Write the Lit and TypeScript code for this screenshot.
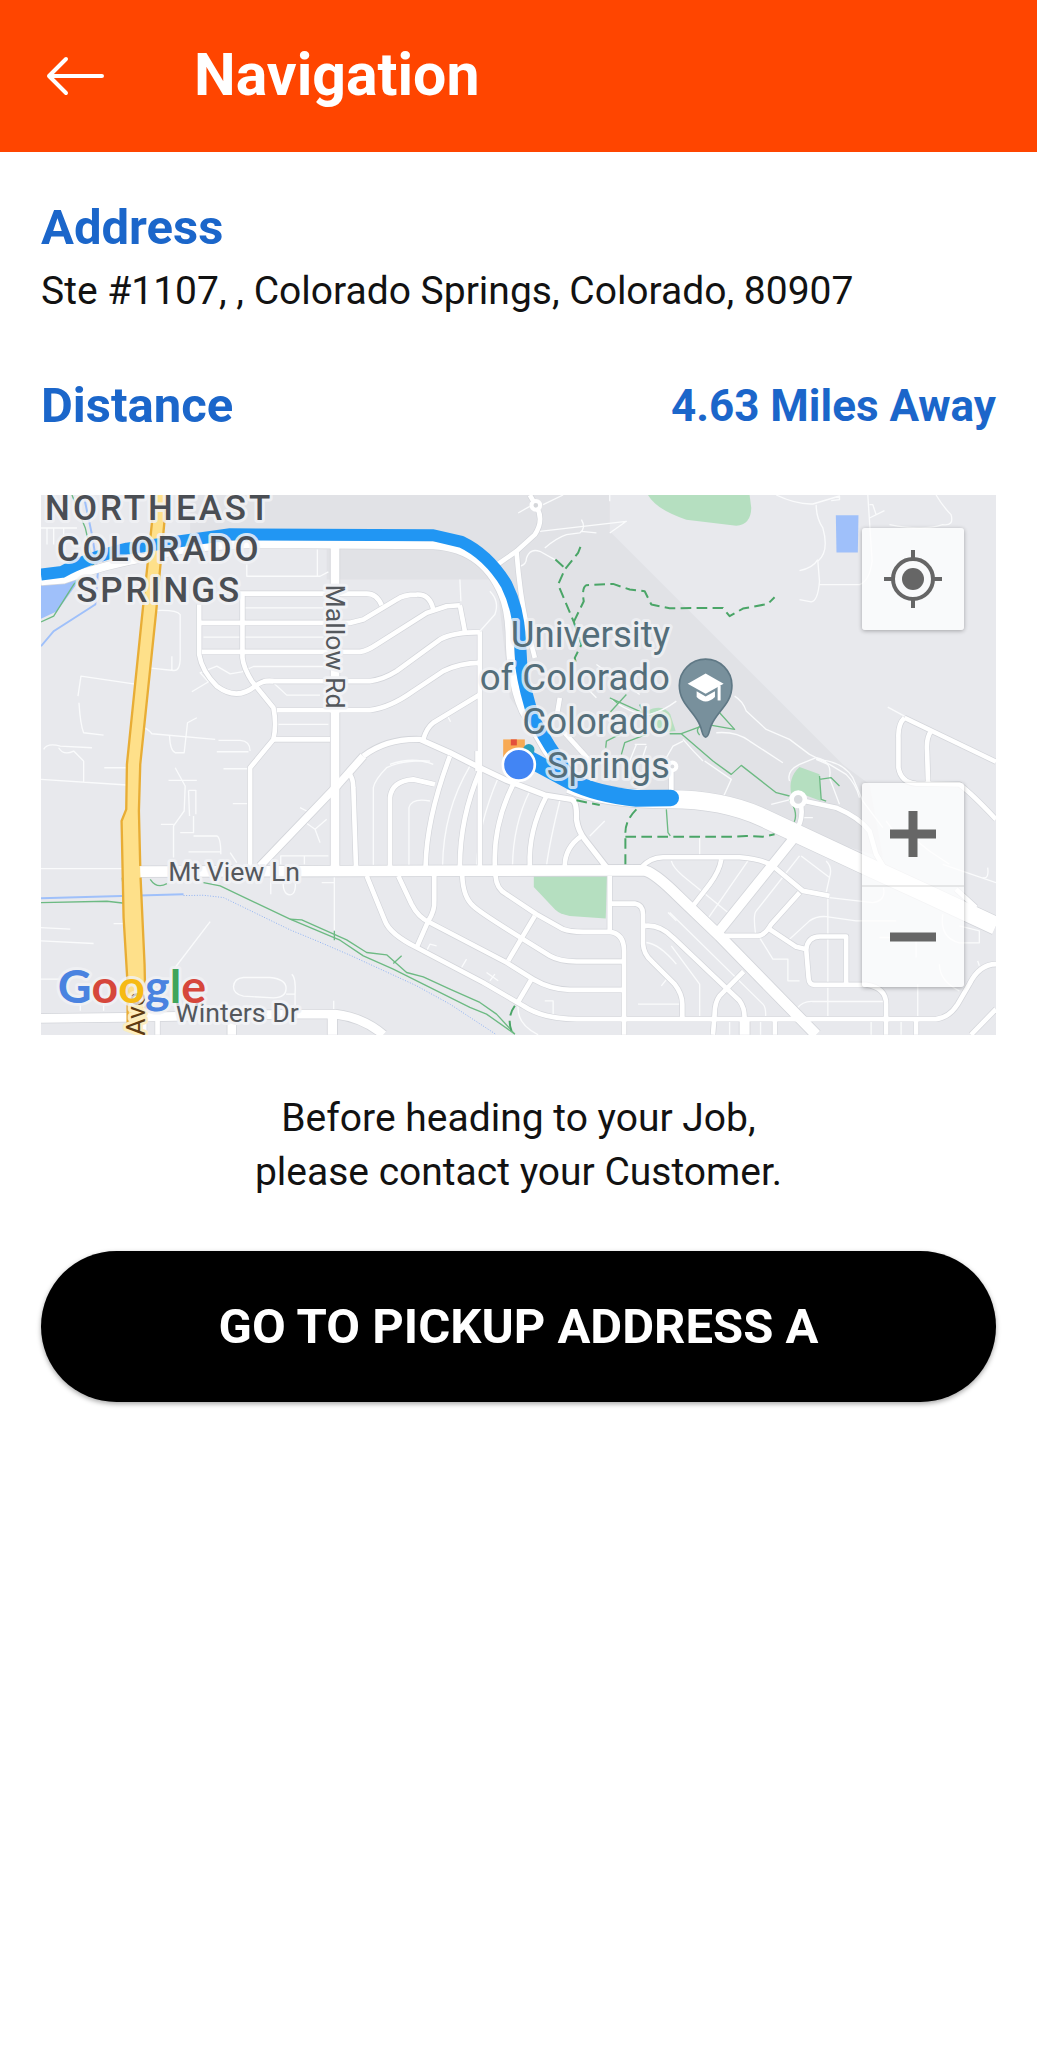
import { LitElement, html, svg, css } from "lit";
import { customElement } from "lit/decorators.js";

// Road geometry, three map units to one pixel at the default width.
const LOCAL_ROADS = [
  "M630 327 H1010 Q1040 327 1055 362",
  "M510 415 H960 L1000 405 L1100 345 Q1120 330 1160 330 Q1200 328 1210 375",
  "M515 502 H990 Q1010 500 1040 480 L1190 385 L1250 365 L1290 362",
  "M1290 362 L1305 440",
  "M700 590 H1020 Q1060 585 1100 560 L1230 465 Q1270 443 1350 443",
  "M1350 440 V1150",
  "M740 677 H1020 Q1080 670 1150 620 L1240 560 Q1290 535 1350 535",
  "M725 765 H900",
  "M1350 630 L1210 715 Q1190 730 1180 765",
  "M507 360 V510 Q515 560 560 605 Q620 650 675 605 Q700 585 730 590",
  "M637 330 V520 Q640 550 665 590 L730 670 Q740 720 730 765 L660 850 V1145",
  "M955 865 Q970 880 970 910 L978 1150",
  "M1080 1145 V940 Q1085 890 1150 885 L1215 900",
  "M1260 815 Q1190 1000 1187 1145",
  "M1350 860 Q1290 1000 1290 1145",
  "M1450 900 Q1390 1020 1395 1145",
  "M1550 935 Q1495 1040 1500 1145",
  "M1655 1055 Q1605 1090 1605 1145",
  "M1343 800 L1343 860",
  "M1010 1175 L1065 1310 Q1080 1350 1160 1390 L1360 1495 L1480 1565 Q1540 1605 1640 1605 H2720 Q2760 1600 2785 1560 L2820 1500 Q2850 1440 2900 1440",
  "M1105 1175 L1145 1260 Q1165 1300 1200 1315 L1430 1435 L1510 1485 Q1560 1515 1620 1517 H1780",
  "M1297 1175 Q1300 1240 1330 1265 Q1350 1285 1480 1365 L1560 1415 Q1590 1432 1640 1432 H1780",
  "M1397 1175 Q1400 1215 1430 1230 L1520 1290 L1600 1335 Q1620 1343 1660 1343 H1740 Q1783 1348 1783 1400 V1652",
  "M1213 1175 V1250 Q1215 1280 1195 1310 L1160 1390",
  "M1515 1295 L1435 1430",
  "M1505 1485 L1462 1558",
  "M1740 1175 V1343",
  "M1740 1258 H1815 Q1840 1262 1840 1290 V1380 Q1842 1410 1865 1430 L1935 1500 Q1958 1530 1958 1560 V1600",
  "M1845 1325 Q1890 1320 1930 1360 L2130 1550 Q2145 1570 2145 1600",
  "M1835 1150 Q1860 1120 1900 1119 H2130 Q2200 1125 2230 1145 L2320 1220 L2400 1235",
  "M2075 1125 Q2070 1160 2040 1200 L1990 1265",
  "M2310 1225 L2225 1320 Q2205 1355 2185 1355 H2085",
  "M2220 1335 L2300 1388 L2330 1395 L2337 1480 Q2338 1502 2355 1502 H2510 Q2570 1510 2570 1560 V1652",
  "M2330 1395 Q2335 1355 2375 1357 H2450 V1500",
  "M2142 1462 L2070 1535 Q2055 1555 2055 1590 L2050 1652",
  "M2236 1605 V1652",
  "M2660 1605 V1652",
  "M2315 965 Q2320 1000 2305 1030",
  "M2325 950 L2420 970 Q2490 1000 2520 1040 L2540 1110 L2570 1160",
  "M2625 700 L2900 832",
  "M2625 700 Q2605 720 2607 760 V850 Q2615 895 2660 898 L2790 900 Q2830 930 2900 1005",
  "M2705 740 Q2690 760 2693 800 L2696 895",
  "M2825 1652 L2900 1575",
  "M1500 31 L1518 62 Q1545 105 1515 150 L1460 200 L1395 245",
  "M1460 200 Q1470 330 1490 420 L1515 520",
  "M1590 640 L1580 700",
  "M1600 740 L1690 840",
  "M342 1605 V1652 M382 1605 V1652",
  "M1925 855 V925",
  "M2780 1215 L2840 1270",
];

const WIDE_ROADS = [
  "M325 1162 L1840 1158 Q1870 1160 1950 1240 L2070 1355 L2360 1652",
  "M915 185 V1162",
  "M690 1145 L925 900 L1000 815",
  "M1000 815 Q1070 762 1170 765 L1260 805 L1340 845 L1430 888 L1545 932 L1625 945 Q1642 950 1640 1005 Q1645 1040 1665 1065 L1735 1155",
  "M2290 1065 L2065 1345",
  "M32 1603 L280 1600 L800 1590 H915 Q1000 1600 1060 1652",
  "M605 1600 V1652",
  "M907 1600 V1652",
  "M2145 1605 V1652",
];
const WIDE_WIDTHS = [32, 26, 22, 16, 28, 26, 26, 28, 30];

const HIGHWAY_WEST =
  "M32 290 L100 285 Q220 240 370 215 Q480 182 700 178 L1210 182 Q1370 190 1425 350 Q1440 400 1440 480 Q1445 600 1480 680 L1550 800 L1620 900";
const HIGHWAY_EAST =
  "M1620 900 Q1720 945 1920 945 Q2080 945 2200 1000 L2500 1140 L2700 1232 L2900 1325";

const LANES = [
  "M1030 1145 V910 Q1035 885 1070 850 Q1120 825 1200 830",
  "M1137 1145 V970 Q1145 940 1200 950",
  "M1238 1145 Q1240 980 1320 845",
  "M1340 1145 Q1345 1020 1405 880",
  "M1448 1145 Q1450 1020 1500 920",
  "M1550 1145 Q1560 1070 1590 950",
  "M650 240 V275 H870 L895 262 M862 195 V275",
  "M640 370 H880 M520 458 H880",
  "M485 622 L535 592 L510 565 L560 545 L600 568 L635 562 L670 546 H880",
  "M730 595 L770 632 H870",
  "M745 720 H895",
  "M375 378 Q440 375 450 390 V520 Q450 560 430 558 L355 550 M425 515 V558",
  "M320 600 L152 575 L143 635 M146 655 Q150 720 160 745 L220 752",
  "M330 725 Q350 730 365 748 L555 765 M565 768 H630 Q660 770 660 800 M560 802 H655",
  "M418 755 Q420 800 435 805 H462 L472 715 L500 700",
  "M40 795 Q50 775 90 785 L185 790 M85 790 Q100 815 130 800 L160 830",
  "M32 885 L290 902 M160 830 V895 M222 850 H290",
  "M435 850 L465 905 L462 980 L430 1025 V1120 M392 1020 H430 M415 888 H500",
  "M475 918 H497 V990 M475 918 L478 995 M490 995 V1045 H450",
  "M490 1055 H560 Q572 1060 572 1110 M475 1103 H570 M600 1105 L620 1135",
  "M580 853 H655 M608 958 H655",
  "M820 1010 L855 1035 L870 1075 M855 1035 L890 1005 M810 970 L830 980",
  "M752 1140 V1115 H895 M823 1115 V1140",
  "M760 1180 Q755 1230 780 1232 Q800 1230 795 1185 M722 1180 V1230",
  "M913 1175 V1340 M875 1195 H915",
  "M32 1153 H280 M32 1330 L120 1335 M32 1370 L190 1378 M250 1318 H285",
  "M540 1312 L435 1450",
  "M640 1480 H720 Q768 1485 768 1512 Q768 1540 730 1541 L640 1536 Q610 1530 610 1508 Q612 1482 640 1480",
  "M768 1530 H795 Q798 1480 785 1470 M795 1530 V1580",
  "M150 1580 V1560 M220 1580 V1550 M911 1580 V1550 M32 1485 H90",
  "M50 130 V180 M70 130 V180 M100 130 V165 M32 130 H140",
  "M1290 285 L1293 350",
  "M1350 440 L1395 390 Q1410 350 1380 320",
  "M1250 690 L1262 712",
  "M1080 840 Q1150 815 1210 840",
  "M1470 245 Q1490 240 1490 220 Q1500 190 1530 200 L1575 225",
  "M1530 140 L1790 110 L1740 145",
  "M1545 190 Q1580 160 1610 150 L1650 145 Q1670 130 1655 105 M1655 140 L1700 145",
  "M1465 85 L1500 65 M1540 60 L1600 31 M1740 31 V50",
  "M2240 31 Q2300 60 2350 58 L2430 34 V45 L2405 48",
  "M2360 60 Q2360 100 2380 130 Q2400 200 2365 230 L2370 290 Q2365 350 2345 352 L2310 345",
  "M2310 258 Q2350 250 2365 225",
  "M2370 300 H2490 Q2520 290 2528 230 L2515 31 M2520 60 L2530 60 L2540 90 M2520 100 L2565 78",
  "M2720 31 Q2740 65 2765 90 Q2775 125 2740 120 Q2680 140 2580 120",
  "M2575 668 L2625 695",
  "M2115 635 Q2140 650 2150 680 L2210 735 L2280 765 L2340 810 L2400 840 L2450 870 Q2480 900 2490 940",
  "M2060 745 Q2120 740 2160 770 L2260 835 M2360 825 L2395 840",
  "M2025 830 L2105 885 L2080 940 M1960 765 Q1990 800 2020 830 M1910 820 L1930 785 L1960 770",
  "M2225 960 L2285 945 M2320 1000 H2350",
  "M1820 780 L1800 830 M1850 785 L1835 830 M1815 780 H1850",
  "M1740 640 Q1800 690 1860 690 Q1900 680 1940 650 M1700 540 L1830 630 M1660 600 L1700 640",
  "M2280 890 Q2270 860 2310 840 L2360 820 Q2410 830 2400 880 L2430 960",
  "M2360 825 Q2440 830 2470 880 L2500 950 L2560 1030",
  "M2010 1060 V1115",
  "M1680 1055 L1725 1010",
  "M1190 1400 L1200 1380 L1220 1385 M1295 1450 L1310 1425 M1380 1490 L1395 1470 M1370 1465 L1405 1490 M1570 1590 V1550 H1545",
  "M1465 1565 Q1460 1620 1525 1652",
  "M1825 1560 H1950 M1850 1375 Q1890 1380 1940 1440 M1895 1505 L1915 1480 M1915 1285 L1940 1310",
  "M1925 1130 Q1930 1150 1960 1175 L2095 1285 M2155 1130 L2030 1310",
  "M2310 1115 L2180 1280 Q2170 1290 2178 1350 M2315 1115 L2400 1180 Q2410 1150 2390 1130 M2390 1225 L2400 1180",
  "M2275 1370 L2340 1310 Q2360 1295 2390 1297 L2480 1310 H2600",
  "M2395 1235 V1600 M2400 1240 L2530 1255 Q2570 1250 2562 1210",
  "M2190 1360 L2230 1425 H2275 V1490 H2310",
  "M1920 1285 L2200 1560 Q2210 1570 2208 1600 M1925 1385 L2010 1500 V1600",
  "M2300 1575 Q2320 1550 2350 1552 H2570",
  "M2100 1612 L2100 1652 M2193 1612 V1652 M2525 1612 V1652 M2615 1612 V1652 M2665 1500 V1560 V1600",
  "M2550 1360 H2660 V1420 M2740 1290 Q2730 1360 2790 1376 H2850 V1340 L2790 1325",
  "M2730 1440 Q2730 1490 2790 1520 M2845 1430 L2850 1445 M2740 1140 L2900 1195 M2875 1150 Q2880 1185 2860 1180",
  "M2570 1010 L2600 1050 L2650 1060 L2700 1100 L2760 1140",
];

const TRAILS = [
  "M125 31 L165 130 L190 240 L130 300 L70 395 L32 412",
  "M32 1255 L230 1251 L283 1257 L276 1180",
  "M360 1185 Q380 1215 410 1198",
  "M520 1195 L570 1205 L780 1305 L930 1368 L1000 1415 L1090 1455 L1180 1500 L1320 1570 L1370 1590 L1455 1650",
  "M780 1305 L815 1307 L950 1367 L1010 1405 L1070 1412 L1130 1465 L1180 1478 L1260 1515 L1350 1555 L1400 1590 L1455 1650",
  "M1090 1438 L1115 1415 M913 1340 V1368",
  "M1740 640 L1840 685 L1830 660 M1735 690 L1790 630 M1750 645 L1765 658",
  "M1920 748 H1955 L2030 720 L2115 735 L2070 685",
  "M1955 748 L2050 830 L2105 870 L2135 843 L2240 925 L2280 935",
  "M1775 810 L1785 775 L1850 750 M1728 790 L1730 770 L1770 750",
  "M2280 945 Q2310 990 2290 1020",
  "M2370 885 L2405 880 L2430 905 M2370 875 L2375 945 L2390 950",
  "M1910 975 L1915 1045 L1922 1055",
  "M2010 752 Q1990 730 2030 715",
];

const DASHED_TRAILS = [
  "M1652 187 L1645 205 L1605 255 L1585 300 L1632 412",
  "M1577 225 L1605 250",
  "M1632 412 L1662 350 Q1655 310 1670 302 L1750 298 L1800 315 L1845 320 L1865 360 L1920 371 L2080 370 L2100 395 L2140 372 L2215 358 L2235 338",
  "M1632 412 L1655 480 L1635 520 L1640 545",
  "M1640 948 L1710 962",
  "M1820 975 Q1785 1010 1787 1050 V1140",
  "M1787 1057 H2120 L2150 1055 L2200 1057 L2235 1050",
  "M1455 1565 Q1430 1600 1445 1640",
];

@customElement("route-map")
export class RouteMap extends LitElement {
  static styles = css`
    :host {
      display: block;
      position: relative;
      overflow: hidden;
    }
    .canvas {
      display: block;
      width: 100%;
      height: auto;
    }
    .land { fill: #e8e9ed; }
    .land-dark { fill: #e1e2e6; }
    .park { fill: #b5dfc0; }
    .water { fill: #9fc0fa; }
    .stream { fill: none; stroke: #9fc0fa; stroke-width: 6; }
    .creek { fill: none; stroke: #8fb2f3; stroke-width: 3; stroke-dasharray: 3 5; }
    .line { fill: none; stroke-linejoin: round; }
    .casing { stroke: #d3d5da; }
    .road { stroke: #fff; }
    .local-casing { stroke-width: 18; }
    .local { stroke-width: 14; }
    .lane { stroke: #fafbfc; stroke-width: 4; }
    .trail { stroke: #6dba83; stroke-width: 4; }
    .dashed { stroke: #4aa567; stroke-width: 6; stroke-dasharray: 32 16; }
    .avenue { fill: #fee08a; stroke: none; }
    .avenue-edge { fill: none; stroke: #e8ad35; stroke-width: 7; }
    .route { stroke: #2196f3; }
    .route-west { stroke-width: 36; }
    .route-east { stroke-width: 50; stroke-linecap: round; }
    .label {
      font-family: Roboto, sans-serif;
      paint-order: stroke;
      stroke: #f1f2f5;
      stroke-width: 18;
      stroke-linejoin: round;
    }
    .district {
      font-size: 105px;
      font-weight: 500;
      fill: #4a4e54;
      stroke-opacity: 0.85;
      text-anchor: middle;
      letter-spacing: 9px;
    }
    .campus {
      font-size: 110px;
      fill: #546e7a;
      stroke-opacity: 0.8;
      text-anchor: end;
    }
    .street { font-size: 80px; fill: #54585d; }
    .avenue-name { font-size: 80px; fill: #5f3b12; stroke: #fdeebf; }
    .brand {
      font-family: Lato, sans-serif;
      font-size: 140px;
      font-weight: 700;
      stroke-opacity: 0.8;
    }
    .b { fill: #4a83e0; }
    .r { fill: #d6473c; }
    .y { fill: #f6ba14; }
    .g { fill: #3fa45a; }
    .control {
      display: flex;
      align-items: center;
      justify-content: center;
      width: 102px;
      height: 102px;
      margin: 0;
      padding: 0;
      border: 0;
      background: none;
      color: #666;
      cursor: pointer;
    }
    .control svg { display: block; }
    .panel {
      position: absolute;
      right: 32px;
      border-radius: 3px;
      background: rgba(255, 255, 255, 0.75);
      box-shadow: 0 1px 4px rgba(0, 0, 0, 0.3);
    }
    .locate { top: 33px; }
    .zoom { bottom: 48px; }
    .zoom .control + .control { border-top: 2px solid rgba(0, 0, 0, 0.08); }
  `;

  render() {
    return html`
      <svg class="canvas" viewBox="32 31 2868 1622" role="img" aria-label="Map of the route">
        <rect class="land" x="32" y="31" width="2868" height="1622" />
        <path class="land-dark" d="M480 31 H1740 V140 L2440 840 L2520 900 L2560 1120 L2300 1040 L1920 950 L1640 930 L1440 640 L1400 285 H890 V195 L480 180 Z" />
        <path class="park" d="M1855 31 Q1880 75 1970 105 L2120 123 Q2164 120 2165 70 L2160 31 Z" />
        <path class="park" d="M1512 1170 V1208 L1575 1275 Q1590 1290 1620 1295 L1728 1303 L1732 1170 Z" />
        <path class="park" d="M2310 848 L2370 870 L2374 950 L2320 930 L2285 930 Q2275 880 2310 848 Z" />
        <path class="park" d="M1850 680 Q1900 655 1922 690 L1938 740 L1890 745 Z" />
        <path class="water" d="M2419 92 H2487 L2485 204 H2421 Z" />
        <path class="water" d="M32 300 L160 270 L80 380 L32 403 Z" />
        <path class="stream" d="M160 31 L185 150 L203 260 L195 360 L70 440 L32 485 M32 1242 L460 1230" />
        <path class="creek" d="M460 1234 L520 1233 L580 1240 L780 1337 L860 1370 L960 1413 L1160 1505 L1260 1560 L1400 1652" />
        ${LANES.map((d) => svg`<path class="line lane" d=${d} />`)}
        ${TRAILS.map((d) => svg`<path class="line trail" d=${d} />`)}
        ${LOCAL_ROADS.map((d) => svg`<path class="line casing local-casing" d=${d} />`)}
        ${WIDE_ROADS.map((d, i) => svg`<path class="line casing" stroke-width=${WIDE_WIDTHS[i] + 5} d=${d} />`)}
        <path class="line casing" stroke-width="28" d=${HIGHWAY_WEST} />
        <path class="line casing" stroke-width="58" d=${HIGHWAY_EAST} />
        ${LOCAL_ROADS.map((d) => svg`<path class="line road local" d=${d} />`)}
        ${WIDE_ROADS.map((d, i) => svg`<path class="line road" stroke-width=${WIDE_WIDTHS[i]} d=${d} />`)}
        <path class="line road" stroke-width="24" d=${HIGHWAY_WEST} />
        <path class="line road" stroke-width="54" d=${HIGHWAY_EAST} />
        <circle cx="1518" cy="62" r="13" fill="#d5d7da" stroke="#fff" stroke-width="12" />
        <circle cx="1928" cy="846" r="12" fill="#d9dbdf" stroke="#fff" stroke-width="12" />
        <circle cx="2306" cy="945" r="20" fill="#d9dbdf" stroke="#fff" stroke-width="14" />
        ${DASHED_TRAILS.map((d) => svg`<path class="line dashed" d=${d} />`)}

        <path class="avenue" d="M374 31 L335 400 L290 840 L288 975 L272 1010 L280 1300 L292 1500 V1620 H346 L343 1440 L330 1162 L326 980 L330 840 L378 380 L410 31 Z" />
        <path class="avenue-edge" d="M374 31 L335 400 L290 840 L288 975 L274 1010 L280 1300 L292 1500 V1625 M410 31 L378 380 L330 840 L326 980 L330 1145 M331 1180 L343 1440 L346 1585" />

        <path class="line route route-west" d="M32 270 L95 262 Q170 220 290 192 L600 149 L1210 152 L1295 172 Q1375 210 1430 300 Q1465 370 1470 460 L1475 550 Q1485 620 1515 710 L1560 785 L1620 875" />
        <path class="line route route-east" d="M1500 825 L1620 890 Q1700 930 1820 942 L1923 941" />
        <rect x="1420" y="765" width="65" height="60" fill="#f8aa54" />
        <rect x="1443" y="765" width="18" height="18" fill="#e3503c" />
        <circle cx="1497" cy="796" r="17" fill="#2b9fbd" />
        <circle cx="1467" cy="841" r="48" fill="#4285f4" stroke="#fff" stroke-width="8" />

        <text class="label district" x="387" y="105">NORTHEAST</text>
        <text class="label district" x="387" y="229">COLORADO</text>
        <text class="label district" x="387" y="352">SPRINGS</text>
        <text class="label campus" x="1921" y="487">University</text>
        <text class="label campus" x="1921" y="618">of Colorado</text>
        <text class="label campus" x="1921" y="750">Colorado</text>
        <text class="label campus" x="1921" y="881">Springs</text>
        <text class="label street" transform="translate(888 300) rotate(90)">Mallow Rd</text>
        <text class="label street" x="414" y="1190">Mt View Ln</text>
        <text class="label street" x="435" y="1615">Winters Dr</text>
        <text class="label avenue-name" transform="translate(345 1655) rotate(-90)">Ave</text>
        <text class="label brand" x="82" y="1558"><tspan class="b">G</tspan><tspan class="r">o</tspan><tspan class="y">o</tspan><tspan class="b">g</tspan><tspan class="g">l</tspan><tspan class="r">e</tspan></text>

        <path d="M2028 758 C2018 758 2018 740 2012 725 C1995 680 1949 660 1949 603 A79 79 0 0 1 2107 603 C2107 660 2061 680 2044 725 C2038 740 2038 758 2028 758 Z" fill="#78909c" stroke="#5f7885" stroke-width="5" />
        <path d="M2028 567 L1974 598 L2028 628 L2082 598 Z" fill="#fff" />
        <path d="M2001 620 V638 Q2028 665 2056 638 V620 L2028 636 Z" fill="#fff" />
        <path d="M2064 604 H2073 V648 H2064 Z" fill="#fff" />
      </svg>
      <div class="panel locate">
        <button class="control" aria-label="My location">
          <svg width="58" height="58" viewBox="0 0 58 58" fill="none" stroke="currentColor">
            <circle cx="29" cy="29" r="20" stroke-width="4" />
            <circle cx="29" cy="29" r="11" fill="currentColor" stroke="none" />
            <path d="M29 0 V8 M29 50 V58 M0 29 H8 M50 29 H58" stroke-width="4" />
          </svg>
        </button>
      </div>
      <div class="panel zoom">
        <button class="control" aria-label="Zoom in">
          <svg width="46" height="46" viewBox="0 0 46 46" stroke="currentColor" stroke-width="9">
            <path d="M23 0 V46 M0 23 H46" />
          </svg>
        </button>
        <button class="control" aria-label="Zoom out">
          <svg width="46" height="46" viewBox="0 0 46 46" stroke="currentColor" stroke-width="9">
            <path d="M0 23 H46" />
          </svg>
        </button>
      </div>
    `;
  }
}

@customElement("app-root")
export class AppRoot extends LitElement {
  static styles = css`
    :host {
      display: block;
      min-height: 100vh;
      background: #fff;
      color: #121212;
      font-family: Roboto, "Noto Sans", sans-serif;
    }
    .bar {
      display: flex;
      align-items: center;
      gap: 88px;
      height: 152px;
      padding: 0 44px;
      box-sizing: border-box;
      background: #ff4500;
      color: #fff;
    }
    .back {
      display: flex;
      padding: 0;
      border: 0;
      background: none;
      color: inherit;
      cursor: pointer;
    }
    .title {
      margin: 0;
      padding-bottom: 2px;
      font-size: 59px;
      line-height: 64px;
      font-weight: 700;
    }
    .page {
      display: flex;
      flex-direction: column;
      padding: 48px 41px;
    }
    .heading {
      margin: 0;
      font-size: 49px;
      line-height: 56px;
      font-weight: 700;
      color: #1b66ca;
    }
    .body {
      margin: 0;
      font-size: 39px;
      line-height: 54px;
    }
    .address { margin-top: 8px; }
    .distance {
      display: flex;
      align-items: center;
      justify-content: space-between;
      margin-top: 60px;
    }
    .miles {
      margin: 0;
      font-size: 44px;
      line-height: 56px;
      font-weight: 700;
      color: #1b66ca;
    }
    .map { margin-top: 61px; }
    .note {
      margin-top: 56px;
      text-align: center;
    }
    .go {
      height: 151px;
      margin-top: 52px;
      border: 0;
      border-radius: 76px;
      background: #000;
      color: #fff;
      font: 700 49px/56px Roboto, "Noto Sans", sans-serif;
      box-shadow: 0 2px 5px rgba(0, 0, 0, 0.35);
      cursor: pointer;
    }
  `;

  render() {
    return html`
      <header class="bar">
        <button class="back" aria-label="Back">
          <svg width="62" height="44" viewBox="0 0 62 44" fill="none" stroke="currentColor" stroke-width="4" stroke-linecap="round" stroke-linejoin="round">
            <path d="M58 22 H5 M22 5 L5 22 L22 39" />
          </svg>
        </button>
        <h1 class="title">Navigation</h1>
      </header>
      <main class="page">
        <h2 class="heading">Address</h2>
        <p class="body address">Ste #1107, , Colorado Springs, Colorado, 80907</p>
        <div class="distance">
          <h2 class="heading">Distance</h2>
          <p class="miles">4.63 Miles Away</p>
        </div>
        <route-map class="map"></route-map>
        <p class="body note">Before heading to your Job,<br />please contact your Customer.</p>
        <button class="go">GO TO PICKUP ADDRESS A</button>
      </main>
    `;
  }
}
